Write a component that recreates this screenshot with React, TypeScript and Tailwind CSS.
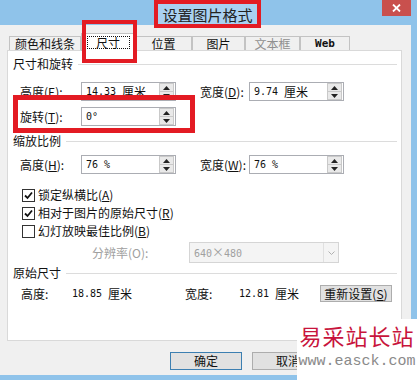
import React from "react";

const MONO = "font-['DejaVu_Sans_Mono',monospace] text-[10px]";

function Tri({ up }: { up?: boolean }) {
  return (
    <svg width="7" height="4" viewBox="0 0 7 4">
      {up ? <polygon points="0,4 7,4 3.5,0" fill="#222" /> : <polygon points="0,0 7,0 3.5,4" fill="#222" />}
    </svg>
  );
}

function Spin() {
  return (
    <div className="w-[15px] h-[17px] mr-px flex flex-col border border-[#c9c9c9] bg-[#e9e9e9]">
      <div className="flex-1 flex items-center justify-center border-b border-[#c9c9c9]">
        <Tri up />
      </div>
      <div className="flex-1 flex items-center justify-center">
        <Tri />
      </div>
    </div>
  );
}

function Field({ num, unit }: { num: string; unit?: string }) {
  return (
    <div className="w-[95px] h-[19px] border border-[#abadb3] bg-white flex items-center">
      <div className="flex-1 pl-[4px] flex items-center leading-[14px]">
        <span className={MONO}>{num}</span>
        {unit ? <span className="ml-[6px]">{unit}</span> : null}
      </div>
      <Spin />
    </div>
  );
}

function Header({ text }: { text: string }) {
  return (
    <div className="h-[14px] flex items-center pl-[5px] pr-[4px] leading-[14px]">
      <span>{text}</span>
      <div className="flex-1 ml-[5px] h-px bg-[#dcdcdc]" />
    </div>
  );
}

function Check({ checked }: { checked?: boolean }) {
  return (
    <div className="w-[13px] h-[13px] border border-[#333] bg-white flex items-center justify-center">
      {checked ? (
        <svg width="9" height="9" viewBox="0 0 9 9">
          <path d="M1 4.5 L3.5 7 L8 1.5" stroke="#111" strokeWidth="1.8" fill="none" />
        </svg>
      ) : null}
    </div>
  );
}

function Tab({ label, w, dim, mono }: { label: string; w: number; dim?: boolean; mono?: boolean }) {
  return (
    <div
      className="h-[14px] border border-b-0 border-[#c3c3c3] bg-[#f0f0f0] flex items-center justify-center leading-[12px]"
      style={{ width: w }}
    >
      <span className={(dim ? "text-[#8f8f8f] " : "") + (mono ? "font-['DejaVu_Sans_Mono',monospace] text-[11px] font-bold" : "")}>
        {label}
      </span>
    </div>
  );
}

export default function App() {
  return (
    <div className="relative w-[417px] h-[380px] overflow-hidden bg-[#8fc3ea] flex flex-col font-['Noto_Sans_CJK_SC',sans-serif] text-[12px] text-[#111]">
      {/* title bar */}
      <div className="h-[25px] relative flex justify-center">
        <div className="relative z-10 ml-[-2px] w-[107px] h-[28px] border-[4px] border-[#e31b23] bg-[#a9d1f1] flex items-center justify-center text-[15px] leading-none text-[#222]">
          设置图片格式
        </div>
        <div className="absolute right-[6px] top-0 w-[29px] h-[16px] bg-[#c9504d] flex items-center justify-center">
          <svg width="9" height="8" viewBox="0 0 9 8">
            <path d="M1 0.5 L8 7.5 M8 0.5 L1 7.5" stroke="#fff" strokeWidth="1.8" />
          </svg>
        </div>
      </div>

      {/* body */}
      <div className="mr-[6px] h-[350px] bg-[#f0f0f0] flex flex-col">
        {/* tabs */}
        <div className="mt-[8px] h-[17px] flex items-end pl-[9px]">
          <Tab label="颜色和线条" w={72} />
          <div className="relative z-10 w-[54px] h-[18px] -mb-px bg-white border border-b-0 border-[#c3c3c3] flex items-center justify-center">
            <div className="w-[43px] h-[13px] border border-dotted border-[#111] flex items-center justify-center leading-[12px]">
              尺寸
            </div>
          </div>
          <Tab label="位置" w={57} />
          <Tab label="图片" w={53} />
          <Tab label="文本框" w={55} dim />
          <Tab label="Web" w={50} mono />
        </div>

        {/* panel */}
        <div className="relative ml-[7px] w-[395px] h-[291px] bg-white border border-[#d9d9d9] flex flex-col">
          <div className="mt-[6px]">
            <Header text="尺寸和旋转" />
          </div>

          <div className="mt-[11px] h-[19px] pl-[12px] flex items-center leading-[14px]">
            <div className="w-[61px]">
              高度(<u>E</u>):
            </div>
            <Field num="14.33" unit="厘米" />
            <div className="ml-[24px] w-[49px]">
              宽度(<u>D</u>):
            </div>
            <Field num="9.74" unit="厘米" />
          </div>

          <div className="mt-[6px] h-[19px] pl-[12px] flex items-center leading-[14px]">
            <div className="w-[61px]">
              旋转(<u>T</u>):
            </div>
            <Field num="0°" />
          </div>

          <div className="mt-[8px]">
            <Header text="缩放比例" />
          </div>

          <div className="mt-[7px] h-[19px] pl-[12px] flex items-center leading-[14px]">
            <div className="w-[61px]">
              高度(<u>H</u>):
            </div>
            <Field num="76 %" />
            <div className="ml-[24px] w-[49px]">
              宽度(<u>W</u>):
            </div>
            <Field num="76 %" />
          </div>

          <div className="mt-[14px] h-[14px] pl-[14px] flex items-center gap-[3px] leading-[14px]">
            <Check checked />
            <span>
              锁定纵横比(<u>A</u>)
            </span>
          </div>
          <div className="mt-[4px] h-[14px] pl-[14px] flex items-center gap-[3px] leading-[14px]">
            <Check checked />
            <span>
              相对于图片的原始尺寸(<u>R</u>)
            </span>
          </div>
          <div className="mt-[4px] h-[14px] pl-[14px] flex items-center gap-[3px] leading-[14px]">
            <Check />
            <span>
              幻灯放映最佳比例(<u>B</u>)
            </span>
          </div>

          <div className="mt-[4px] h-[21px] pl-[84px] flex items-center leading-[14px]">
            <div className="w-[97px] text-[#a0a0a0]">分辨率(O):</div>
            <div className="w-[150px] h-[21px] border border-[#d5d5d5] bg-[#f4f4f4] flex items-center">
              <span className="flex-1 pl-[4px] text-[#a0a0a0]">
                <span className={MONO}>640</span>×<span className={MONO}>480</span>
              </span>
              <div className="w-[15px] h-full border-l border-[#e0e0e0] flex items-center justify-center">
                <svg width="7" height="4" viewBox="0 0 7 4">
                  <path d="M0.5 0.5 L3.5 3.5 L6.5 0.5" stroke="#b0b0b0" fill="none" />
                </svg>
              </div>
            </div>
          </div>

          <div className="mt-[3px]">
            <Header text="原始尺寸" />
          </div>

          <div className="mt-[5px] h-[17px] pl-[13px] flex items-center leading-[14px]">
            <div className="w-[51px]">高度:</div>
            <div className="w-[113px] flex items-center">
              <span className={MONO}>18.85</span>
              <span className="ml-[6px]">厘米</span>
            </div>
            <div className="w-[54px]">宽度:</div>
            <div className="w-[81px] flex items-center">
              <span className={MONO}>12.81</span>
              <span className="ml-[6px]">厘米</span>
            </div>
            <div className="w-[72px] h-[17px] border border-[#adadad] bg-[#e1e1e1] flex items-center justify-center">
              重新设置(<u>S</u>)
            </div>
          </div>

          {/* red annotation around rotation */}
          <div className="absolute left-[5px] top-[44px] w-[182px] h-[38px] border-[5px] border-[#e31b23]" />
        </div>

        {/* buttons */}
        <div className="mt-[11px] h-[18px] pl-[170px] flex gap-[10px] leading-[14px]">
          <div className="w-[72px] h-[18px] border border-[#3c7fb1] bg-[#e1e1e1] flex items-center justify-center">确定</div>
          <div className="w-[72px] h-[18px] border border-[#adadad] bg-[#e1e1e1] flex items-center justify-center">取消</div>
        </div>
      </div>

      {/* red annotation around size tab */}
      <div className="absolute left-[82px] top-[20px] w-[55px] h-[43px] border-[4px] border-[#e31b23] z-20" />

      {/* watermark */}
      <div className="absolute right-0 bottom-0 w-[120px] h-[61px] bg-white flex flex-col items-center pt-[3px] z-30">
        <div className="text-[22px] leading-[26px] tracking-[1px] text-[#c8143c] font-['Noto_Sans_CJK_SC',serif]">易采站长站</div>
        <div className="mt-[6px] font-['Liberation_Mono',monospace] text-[15px] leading-[16px] text-[#8a8a8a]">www.easck.com</div>
      </div>
    </div>
  );
}
